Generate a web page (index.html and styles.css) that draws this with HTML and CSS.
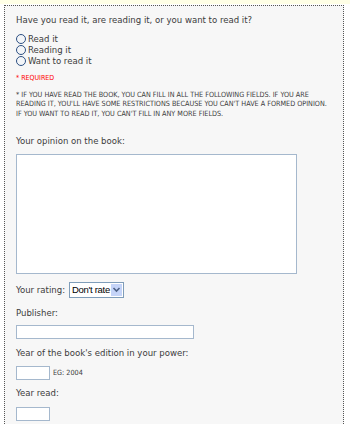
FILE: index.html
```html
<!DOCTYPE html>
<html>
<head>
<meta charset="utf-8">
<link rel="stylesheet" href="styles.css">
</head>
<body>
<div class="topbar"></div>
<div class="panel">
  <p class="question">Have you read it, are reading it, or you want to read it?</p>
  <div class="radios">
    <label class="radio"><span class="circle"></span>Read it</label>
    <label class="radio"><span class="circle"></span>Reading it</label>
    <label class="radio"><span class="circle"></span>Want to read it</label>
  </div>
  <p class="required">* REQUIRED</p>
  <p class="note">* IF YOU HAVE READ THE BOOK, YOU CAN FILL IN ALL THE FOLLOWING FIELDS. IF YOU ARE READING IT, YOU'LL HAVE SOME RESTRICTIONS BECAUSE YOU CAN'T HAVE A FORMED OPINION. IF YOU WANT TO READ IT, YOU CAN'T FILL IN ANY MORE FIELDS.</p>
  <p class="label opinion-label">Your opinion on the book:</p>
  <div class="textarea"></div>
  <div class="rating">
    <span class="label">Your rating:</span>
    <span class="select"><span class="select-text">Don't rate</span><span class="arrow"><svg width="9" height="9" viewBox="0 0 9 9"><path d="M1.5 3 L4.5 6 L7.5 3" fill="none" stroke="#4d6185" stroke-width="1.6"/></svg></span></span>
  </div>
  <p class="label publisher-label">Publisher:</p>
  <div class="input wide"></div>
  <p class="label year-label">Year of the book's edition in your power:</p>
  <div class="row"><div class="input small"></div><span class="eg">EG: 2004</span></div>
  <p class="label read-label">Year read:</p>
  <div class="input small last"></div>
</div>
</body>
</html>
```
FILE: styles.css
```css
html, body {
  margin: 0;
  padding: 0;
  background: #ffffff;
}
body {
  width: 350px;
  height: 424px;
  overflow: hidden;
  font-family: "DejaVu Sans Condensed", "DejaVu Sans", sans-serif;
  color: #3c3c3c;
}
.topbar {
  height: 4px;
  background: #ffffe6;
}
.panel {
  margin: 1px 6px 0 4px;
  border: 1px dotted #555555;
  border-bottom: none;
  background: #f7f7f7;
  padding: 8px 6px 0 11px;
  height: 410px;
  overflow: hidden;
}
p { margin: 0; }
.question {
  font-size: 9.5px;
  line-height: 12px;
}
.radios {
  margin-top: 7px;
  display: flex;
  flex-direction: column;
}
.radio {
  display: flex;
  align-items: center;
  font-size: 9.5px;
  height: 11px;
  line-height: 11px;
}
.circle {
  width: 8px;
  height: 8px;
  border: 1px solid #2d5083;
  border-radius: 50%;
  background: #f3f5f8;
  margin-right: 2px;
}
.required {
  color: #ff0000;
  font-size: 7px;
  line-height: 10px;
  margin-top: 7px;
}
.note {
  font-size: 7.2px;
  line-height: 9.3px;
  margin-top: 7px;
  max-width: 316px;
}
.label {
  font-size: 9.5px;
  line-height: 12px;
}
.opinion-label { margin-top: 17px; }
.textarea {
  width: 281px;
  height: 120px;
  box-sizing: border-box;
  border: 1px solid #a5b8cd;
  background: #ffffff;
  margin-top: 7px;
}
.rating {
  display: flex;
  align-items: center;
  margin-top: 8px;
  gap: 4px;
}
.select {
  display: flex;
  align-items: center;
  height: 16px;
  border: 1px solid #7f9db9;
  background: #ffffff;
  box-sizing: border-box;
  padding-left: 2px;
  padding-right: 1px;
}
.select-text {
  font-family: "Liberation Sans", Arial, sans-serif;
  font-size: 9.5px;
  color: #000;
  letter-spacing: -0.3px;
  margin-right: 1px;
}
.arrow {
  display: flex;
  align-items: center;
  justify-content: center;
  width: 11px;
  height: 12px;
  background: #c5d4f8;
}
.input {
  background: #fff;
  border: 1px solid #a5b8cd;
  height: 14px;
  box-sizing: border-box;
}
.publisher-label { margin-top: 9px; }
.wide { width: 178px; margin-top: 6px; }
.small { width: 34px; }
.year-label { margin-top: 8px; }
.row {
  display: flex;
  align-items: center;
  margin-top: 7px;
  gap: 3px;
}
.eg {
  font-size: 7.2px;
}
.read-label { margin-top: 7px; }
.last { margin-top: 8px; }
```
